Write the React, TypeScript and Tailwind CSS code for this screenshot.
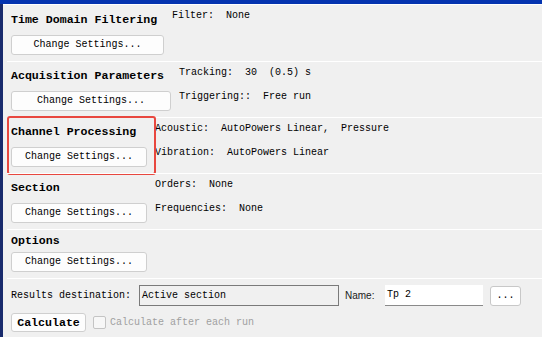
const mono = { fontFamily: "'Liberation Mono', 'DejaVu Sans Mono', monospace" };

function SettingsButton({ width }: { width: number }) {
  return (
    <button
      className="block h-[20px] rounded-[3px] border border-[#cfcfcf] bg-[#fdfdfd] text-[10px] leading-none text-black"
      style={{ width }}
    >
      Change Settings...
    </button>
  );
}

type Section = {
  title: string;
  button: number;
  lines: string[];
  highlight?: boolean;
};

const sections: Section[] = [
  { title: "Time Domain Filtering", button: 153, lines: ["Filter:  None"] },
  {
    title: "Acquisition Parameters",
    button: 160,
    lines: ["Tracking:  30  (0.5) s", "Triggering::  Free run"],
  },
  {
    title: "Channel Processing",
    button: 136,
    lines: ["Acoustic:  AutoPowers Linear,  Pressure", "Vibration:  AutoPowers Linear"],
    highlight: true,
  },
  { title: "Section", button: 136, lines: ["Orders:  None", "Frequencies:  None"] },
];

export default function App() {
  return (
    <div className="flex h-[337px] w-[542px] flex-col overflow-hidden bg-[#f0f0f0] text-black" style={mono}>
      <div className="h-[4px] shrink-0 bg-[#0434b0]" />
      <div className="flex flex-1">
        <div className="w-[3px] shrink-0 bg-[#182a6c]" />
        <div className="flex-1 border-t border-white">
          <div className="pl-[4px]">
            {sections.map((s, i) => (
              <div
                key={s.title}
                className={`relative flex h-[56px] gap-[8px] pl-[4px] ${i > 0 ? "border-t border-white" : "h-[56px]"}`}
              >
                <div className={`flex flex-col ${i === 0 ? "pt-[7px]" : "pt-[6px]"}`}>
                  <div className="h-[16px] text-[11.6px] font-bold leading-[16px] whitespace-pre">{s.title}</div>
                  <div className="mt-[7px]">
                    <SettingsButton width={s.button} />
                  </div>
                </div>
                <div className="flex flex-col gap-[8px] pt-[3px]">
                  {s.lines.map((l) => (
                    <div key={l} className="h-[16px] text-[10px] leading-[16px] whitespace-pre">
                      {l}
                    </div>
                  ))}
                </div>
                {s.highlight && (
                  <div className="pointer-events-none absolute left-0 top-[-2px] h-[59px] w-[149px] rounded-[3px] border-2 border-[#e8473f]" />
                )}
              </div>
            ))}

            {/* Options */}
            <div className="flex h-[49px] flex-col border-t border-white pl-[4px] pt-[3px]">
              <div className="h-[16px] text-[11.6px] font-bold leading-[16px]">Options</div>
              <div className="mt-[3px]">
                <SettingsButton width={136} />
              </div>
            </div>

            {/* results */}
            <div className="flex flex-col gap-[7px] border-t border-white pl-[4px] pt-[6px]">
              <div className="flex h-[21px] items-center">
                <span className="w-[128px] text-[10px] whitespace-pre">Results destination:</span>
                <div className="flex h-[21px] w-[200px] items-center border border-[#7a7a7a] bg-[#f0f0f0] pl-[2px] text-[10px]">
                  Active section
                </div>
                <span
                  className="ml-[6px] w-[40px] text-[10px] text-[#202020]"
                  style={{ fontFamily: "'Liberation Sans', Arial, sans-serif" }}
                >
                  Name:
                </span>
                <div className="flex h-[21px] w-[98px] items-start border-b border-[#8a8a8a] bg-white pl-[2px] pt-[2px] text-[10px] whitespace-pre">
                  Tp 2
                </div>
                <button className="ml-[7px] h-[20px] w-[31px] rounded-[3px] border border-[#c8c8c8] bg-white text-[10px] leading-none">
                  ...
                </button>
              </div>
              <div className="flex h-[19px] items-center">
                <button className="h-[19px] w-[75px] rounded-[3px] border border-[#cfcfcf] bg-[#fdfdfd] text-[11.6px] font-bold leading-none">
                  Calculate
                </button>
                <span className="ml-[7px] h-[13px] w-[13px] rounded-[2px] border border-[#c4c4c4] bg-[#f7f7f7]" />
                <span className="ml-[4px] text-[10px] whitespace-pre text-[#a0a0a0]">Calculate after each run</span>
              </div>
            </div>
          </div>
        </div>
      </div>
    </div>
  );
}
